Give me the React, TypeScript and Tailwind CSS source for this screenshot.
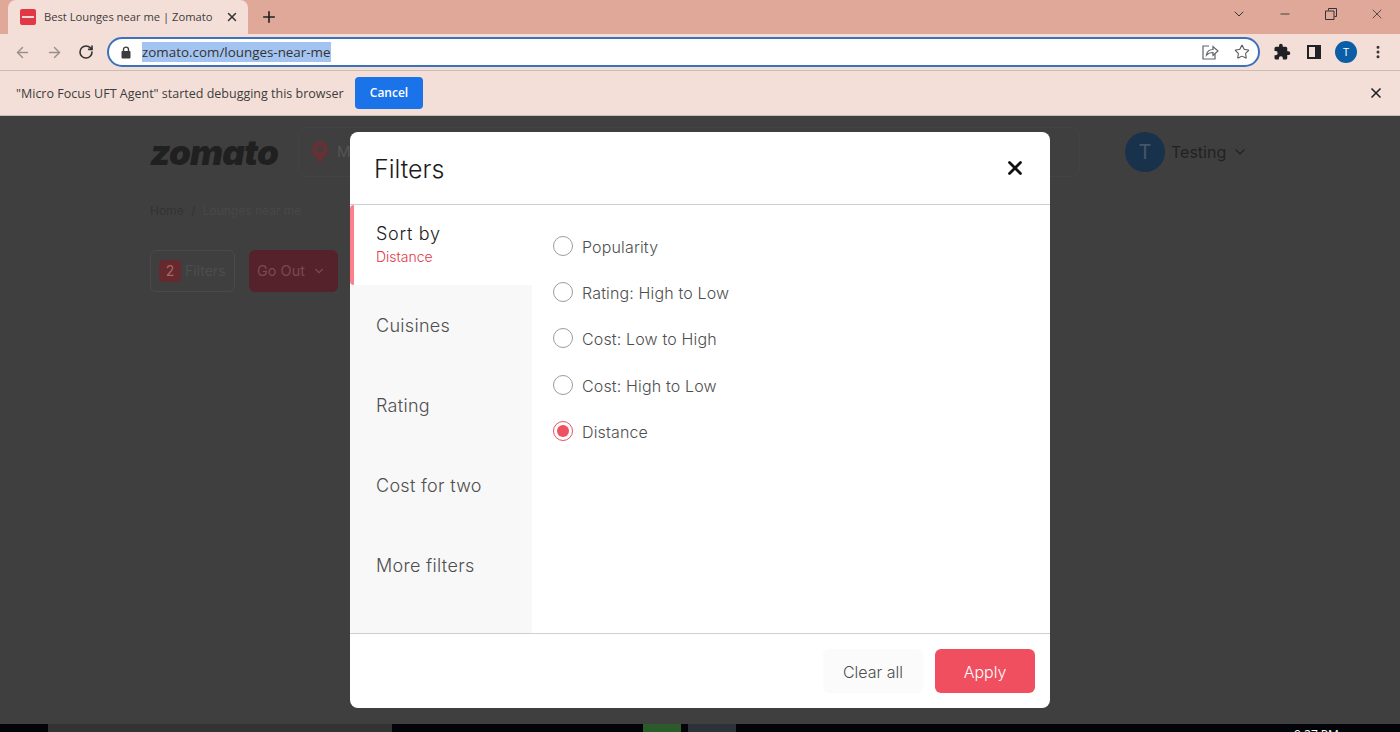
import React from 'react';
import { ArrowLeft, ArrowRight, ChevronDown, Minus, MoreVertical, Plus, RotateCw, Star, X } from 'lucide-react';

const sortOptions = ['Popularity', 'Rating: High to Low', 'Cost: Low to High', 'Cost: High to Low', 'Distance'];
const filterTabs = ['Cuisines', 'Rating', 'Cost for two', 'More filters'];

const Puzzle = () => (
  <svg width="18" height="18" viewBox="0 0 24 24" fill="#202124">
    <path d="M20.5 11H19V7a2 2 0 0 0-2-2h-4V3.5a2.5 2.5 0 0 0-5 0V5H4a2 2 0 0 0-2 2v3.8h1.5a2.7 2.7 0 0 1 0 5.4H2V20a2 2 0 0 0 2 2h3.8v-1.5a2.7 2.7 0 0 1 5.4 0V22H17a2 2 0 0 0 2-2v-4h1.5a2.5 2.5 0 0 0 0-5z" />
  </svg>
);

const ShareIcon = () => (
  <svg width="18" height="18" viewBox="0 0 18 18" fill="none" stroke="#5f6368" strokeWidth="1.2">
    <path d="M8 3H2v13h12v-5" />
    <path d="M5.5 12c.5-3.5 3-5.5 6.5-5.5V3.5l5 4.5-5 4.5V9.5c-2.500 0-5 .8-6.500 2.500z" />
  </svg>
);

const LockIcon = () => (
  <svg width="12" height="13" viewBox="0 0 12 13" fill="#3c3c3c">
    <path d="M3.500 5.500V3.600a2.500 2.500 0 0 1 5 0v1.900" fill="none" stroke="#3c3c3c" strokeWidth="1.400" />
    <rect x="1.500" y="5" width="9" height="7.500" rx="1" />
  </svg>
);

const App: React.FC = () => {
  return (
    <div className="w-[1400px] h-[732px] overflow-hidden flex flex-col font-['Open_Sans',sans-serif]">
      {/* Tab strip */}
      <div className="h-[34px] bg-[#e0a899] flex items-end shrink-0">
        <div className="ml-2 w-[240px] h-[34px] bg-[#f4dfd8] rounded-t-lg flex items-center pl-3 pr-[9px]">
          <div className="w-4 h-4 rounded-[2px] bg-[#e23744] flex items-center justify-center">
            <div className="w-3 h-[2px] bg-white/80"></div>
          </div>
          <span className="ml-2 text-[11.2px] text-[#3c3c3c] whitespace-nowrap">Best Lounges near me | Zomato</span>
          <X size={14} strokeWidth={2.5} className="ml-auto text-[#333]" />
        </div>
        <Plus size={18} strokeWidth={2.2} className="ml-[12px] mb-[8px] text-[#222]" />
        <div className="ml-auto flex items-center self-start h-[28px] text-[#333]">
          <ChevronDown size={16} strokeWidth={1.5} className="mr-[31px]" />
          <Minus size={14} strokeWidth={1.5} className="mr-[33px]" />
          <svg width="12" height="12" viewBox="0 0 12 12" fill="none" stroke="#333" className="mr-[32px]">
            <path d="M3.500 2.500V.5h8v8h-2M.5 3h8.500v8.500H.5z" />
          </svg>
          <X size={16} strokeWidth={1.2} className="mr-[15px]" />
        </div>
      </div>

      {/* Toolbar */}
      <div className="h-[37px] bg-[#f4dfd8] border-b border-[#c9bcb8] flex items-center shrink-0">
        <ArrowLeft size={17} strokeWidth={2} className="ml-[14px] text-[#9a8f8c]" />
        <ArrowRight size={17} strokeWidth={2} className="ml-[15px] text-[#9a8f8c]" />
        <RotateCw size={16} strokeWidth={2.4} className="ml-[15px] text-[#333]" />
        <div className="ml-[13px] w-[1153px] h-[30px] bg-white rounded-full border-2 border-[#3b72b9] flex items-center pl-[11px] pr-[8px]">
          <LockIcon />
          <span className="ml-[10px] text-[13.4px] leading-[20px] bg-[#a3c4f0] text-[#333] whitespace-nowrap">zomato.com/lounges-near-me</span>
          <div className="ml-auto flex items-center gap-[15px]">
            <ShareIcon />
            <Star size={16} strokeWidth={1.6} className="text-[#555]" />
          </div>
        </div>
        <div className="ml-[13px]"><Puzzle /></div>
        <div className="ml-[16px] w-[14px] h-[14px] border-2 border-[#202124] border-r-[6px]"></div>
        <div className="ml-[14px] w-[22px] h-[22px] rounded-full bg-[#0b5ea6] flex items-center justify-center text-[11px] text-white">T</div>
        <MoreVertical size={16} strokeWidth={2.5} className="ml-[13px] text-[#333]" />
      </div>

      {/* Debugging bar */}
      <div className="h-[45px] bg-[#f4dfd8] border-b border-[#c9bcb8] flex items-center pl-4 shrink-0">
        <span className="w-[327px] pt-[2px] text-[12.5px] text-[#3c3c3c] whitespace-nowrap">"Micro Focus UFT Agent" started debugging this browser</span>
        <button className="ml-3 w-[68px] h-8 bg-[#1a73e8] rounded text-xs font-semibold text-white">Cancel</button>
        <X size={16} strokeWidth={2.5} className="ml-auto mr-4 text-[#222]" />
      </div>

      {/* Page behind the dialog */}
      <div className="relative flex-1 bg-[#3f3f3f]">
        <div className="pl-[150px] pt-[15px] font-['Inter',sans-serif]">
          <div className="flex items-center h-[42px]">
            <span className="w-[148px] text-[35px] font-black italic tracking-[-0.8px] text-[#202020]">zomato</span>
            <div className="w-[782px] h-[50px] shrink-0 border border-[#434343] rounded-lg flex items-center pl-[12px]">
              <svg width="18" height="22" viewBox="0 0 18 22" fill="#633136">
                <path fillRule="evenodd" d="M9 0a8 8 0 0 0-8 8c0 6 8 14 8 14s8-8 8-14a8 8 0 0 0-8-8zm0 5a3 3 0 1 1 0 6 3 3 0 0 1 0-6z" />
              </svg>
              <span className="ml-2 text-[15px] text-[#555]">M</span>
            </div>
            <div className="ml-[45px] flex items-center">
              <div className="w-10 h-10 rounded-full bg-[#17324a] flex items-center justify-center text-xl text-[#47566a]">T</div>
              <span className="ml-[6px] text-[16px] text-[#222]">Testing</span>
              <ChevronDown size={16} className="ml-[6px] text-[#222]" />
            </div>
          </div>
          <div className="mt-[30px] text-xs text-[#333]">
            Home <span className="mx-1">/</span> <span className="text-[#484848]">Lounges near me</span>
          </div>
          <div className="mt-[31px] flex items-center gap-[14px]">
            <div className="w-[85px] h-[42px] rounded-md border border-[#4a4a4a] flex items-center pl-2 text-sm text-[#4d4d4d]">
              <span className="w-[22px] h-[22px] rounded bg-[#662a2e] text-center text-[#a66] leading-[22px] mr-1">2</span>
              Filters
            </div>
            <div className="w-[89px] h-[42px] rounded-md bg-[#55212a] flex items-center pl-2 text-[14.5px] text-[#7a4a4f]">
              Go Out
              <ChevronDown size={14} className="ml-[7px]" />
            </div>
          </div>
        </div>

        {/* Filters dialog */}
        <div className="absolute inset-0 flex items-center justify-center font-['Inter',sans-serif]">
          <div className="w-[700px] h-[576px] bg-white rounded-lg flex flex-col overflow-hidden">
            <div className="h-[73px] border-b border-[#cfcfcf] flex items-center justify-between pl-6 pr-6 shrink-0">
              <span className="pt-[3px] text-[25px] font-light text-[#1c1c1c]">Filters</span>
              <X size={22} strokeWidth={3} className="text-[#111]" />
            </div>
            <div className="flex-1 flex min-h-0">
              <div className="w-[182px] bg-[#f8f8f8] shrink-0">
                <div className="h-[80px] bg-white border-l-4 border-[#ff7e8b] rounded-l-sm pl-[22px] pt-[17px]">
                  <div className="text-lg font-light leading-6 tracking-[0.7px] text-[#1c1c1c]">Sort by</div>
                  <div className="pt-[1px] text-sm font-light leading-5 text-[#e23744]">Distance</div>
                </div>
                {filterTabs.map((tab) => (
                  <div key={tab} className="h-[80px] pl-[26px] pt-[2px] flex items-center text-lg font-light tracking-[0.3px] text-[#4f4f4f]">{tab}</div>
                ))}
              </div>
              <div className="flex-1 pl-[21px] pt-[17.9px]">
                {sortOptions.map((option) => (
                  <div key={option} className="h-[46.2px] flex items-center">
                    {option === 'Distance' ? (
                      <div className="w-5 h-5 rounded-full border border-[#ef4f5f] flex items-center justify-center">
                        <div className="w-3 h-3 rounded-full bg-[#ef4f5f]"></div>
                      </div>
                    ) : (
                      <div className="w-5 h-5 rounded-full border border-[#9c9c9c]"></div>
                    )}
                    <span className="ml-[9px] pt-[2px] text-base font-light tracking-[0.15px] text-[#4f4f4f]">{option}</span>
                  </div>
                ))}
              </div>
            </div>
            <div className="h-[75px] border-t border-[#cfcfcf] flex items-center justify-end gap-[12px] pr-[15px] shrink-0">
              <button className="w-[100px] h-11 pt-[2px] rounded-md bg-[#fbfbfb] text-base font-light text-[#4f4f4f]">Clear all</button>
              <button className="w-[100px] h-11 pt-[2px] rounded-md bg-[#ef4f5f] text-base font-light text-white">Apply</button>
            </div>
          </div>
        </div>
      </div>

      {/* Windows taskbar, mostly cut off */}
      <div className="h-2 bg-[#02040a] flex shrink-0 overflow-hidden">
        <div className="ml-[48px] w-[344px] bg-[#333333]"></div>
        <div className="ml-[251px] w-[38px] bg-[#2b5a2b]"></div>
        <div className="ml-[7px] w-[48px] bg-[#2c3238]"></div>
        <span className="ml-[558px] pt-[3px] text-xs leading-4 text-white whitespace-nowrap">9:27 PM</span>
      </div>
    </div>
  );
};

export default App;
